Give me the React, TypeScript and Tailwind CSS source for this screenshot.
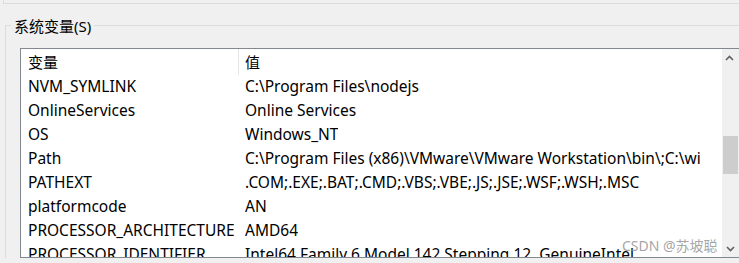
const rows: [string, string][] = [
  ["NVM_SYMLINK", "C:\\Program Files\\nodejs"],
  ["OnlineServices", "Online Services"],
  ["OS", "Windows_NT"],
  ["Path", "C:\\Program Files (x86)\\VMware\\VMware Workstation\\bin\\;C:\\wi"],
  ["PATHEXT", ".COM;.EXE;.BAT;.CMD;.VBS;.VBE;.JS;.JSE;.WSF;.WSH;.MSC"],
  ["platformcode", "AN"],
  ["PROCESSOR_ARCHITECTURE", "AMD64"],
  ["PROCESSOR_IDENTIFIER", "Intel64 Family 6 Model 142 Stepping 12, GenuineIntel"],
];

function Chevron({ up }: { up?: boolean }) {
  return (
    <svg width="9" height="6" viewBox="0 0 9 6" className={up ? "" : "rotate-180"}>
      <path d="M1 5 L4.5 1.5 L8 5" fill="none" stroke="#606060" strokeWidth="1.6" />
    </svg>
  );
}

export default function App() {
  return (
    <div
      className="relative w-[739px] h-[263px] overflow-hidden bg-[#f0f0f0] text-[15px] text-black"
      style={{ fontFamily: '"Noto Sans", "Noto Sans CJK SC", sans-serif' }}
    >
      {/* bottom of the previous group box */}
      <div className="h-[3px] border-l border-[#dcdcdc] ml-[3px]" />
      <div className="h-px bg-[#dcdcdc] ml-[3px]" />

      <div className="relative mt-[21px] ml-[5px] border-l border-t border-[#dcdcdc] pt-[22px] pl-[14px]">
        <div className="absolute -top-[13px] left-[5px] bg-[#f0f0f0] px-[3px] leading-[26px]">
          系统变量(S)
        </div>

        <div className="flex h-[210px] border-l border-t border-b border-[#828790] bg-white text-[15.5px]">
          <div className="flex-1 overflow-hidden">
            <div className="flex h-[26px] items-center text-[15px]">
              <div className="w-[217px] shrink-0 pl-[7px]">变量</div>
              <div className="h-full w-px bg-[#e5e5e5]" />
              <div className="pl-[6px]">值</div>
            </div>
            {rows.map(([k, v]) => (
              <div key={k} className="flex h-[24px] items-center whitespace-nowrap">
                <div className="w-[218px] shrink-0 overflow-hidden pl-[7px]">{k}</div>
                <div className="overflow-hidden pl-[6px]">{v}</div>
              </div>
            ))}
          </div>
          <div className="ml-[2px] flex w-[17px] shrink-0 flex-col bg-[#f0f0f0]">
            <div className="flex h-[17px] items-center pl-[3px]">
              <Chevron up />
            </div>
            <div className="h-[70px]" />
            <div className="h-[38px] w-[15px] ml-px bg-[#cdcdcd]" />
            <div className="flex-1" />
            <div className="flex h-[17px] items-center pl-[4px]">
              <Chevron />
            </div>
          </div>
        </div>
      </div>

      <div className="absolute left-[622px] top-[235px] text-[14px] text-[#9a9a9a]/90">CSDN @苏坡聪</div>
    </div>
  );
}
